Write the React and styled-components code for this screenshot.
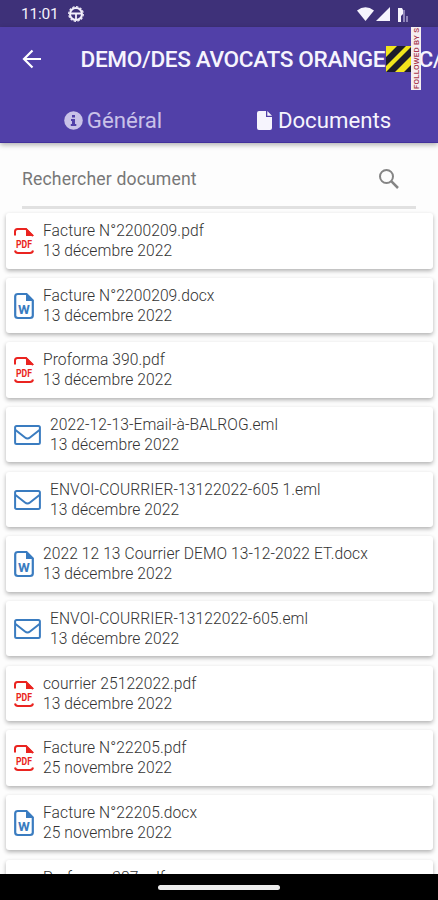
import React from "react";
import styled, { createGlobalStyle, css } from "styled-components";

const GlobalStyle = createGlobalStyle`
  * {
    box-sizing: border-box;
  }

  body {
    margin: 0;
    font-family: Roboto, "Liberation Sans", sans-serif;
    background-color: #fafafa;
  }

  svg {
    flex-shrink: 0;
  }
`;

const Screen = styled.div`
  width: 438px;
  height: 900px;
  overflow: hidden;
  display: flex;
  flex-direction: column;
  background-color: #fdfdfd;
`;

const StatusBar = styled.div`
  height: 27px;
  flex-shrink: 0;
  padding: 1px 29px 0 21px;
  display: flex;
  align-items: center;
  justify-content: space-between;
  background-color: #3e3179;
  color: #f3f0fb;
`;

const StatusGroup = styled.div`
  display: flex;
  align-items: center;
  gap: ${(props) => props.gap}px;
`;

const Clock = styled.span`
  font-size: 15.5px;
  letter-spacing: -0.2px;
`;

const Header = styled.header`
  position: relative;
  z-index: 1;
  height: 116px;
  flex-shrink: 0;
  background-color: #5140a8;
  border-bottom: 1px solid #42309c;
  color: #f6f4fd;
  box-shadow: 0 2px 5px rgba(0, 0, 0, 0.3);
`;

const TitleRow = styled.div`
  height: 64px;
  padding-left: 22px;
  display: flex;
  align-items: center;
  overflow: hidden;
`;

const Title = styled.h1`
  margin: 0 0 0 38.5px;
  font-size: 22.6px;
  font-weight: 500;
  letter-spacing: -0.35px;
  white-space: nowrap;
`;

const Tabs = styled.nav`
  display: grid;
  grid-template-columns: 226px 1fr;
`;

const Tab = styled.div`
  height: 58px;
  padding-right: ${(props) => (props.active ? 16 : 0)}px;
  display: flex;
  align-items: center;
  justify-content: center;
  gap: ${(props) => (props.active ? 6 : 4)}px;
  font-size: 22.2px;
  color: ${(props) => (props.active ? "#f6f4fd" : "#c9c2e8")};
`;

const Banner = styled.div`
  position: absolute;
  top: 0;
  left: 386px;
  width: 35px;
  height: 63px;
`;

const Hazard = styled.svg`
  position: absolute;
  top: 19px;
  left: 0;
`;

const Strip = styled.svg`
  position: absolute;
  top: 0;
  left: 25px;
`;

const Search = styled.div`
  height: 66px;
  flex-shrink: 0;
  margin: 0 22px;
  padding: 8px 16px 0 0;
  display: flex;
  align-items: center;
  justify-content: space-between;
  border-bottom: 3px solid #e1e1e1;
  font-size: 17.6px;
  color: #777;
`;

const Placeholder = styled.span`
  letter-spacing: 0.15px;
`;

const List = styled.div`
  flex: 1;
  min-height: 0;
  overflow: hidden;
  padding: 4px 5px 0 6px;
`;

const Card = styled.div`
  height: 55.5px;
  margin-bottom: 9.17px;
  padding: 0.5px 0 0 8px;
  display: flex;
  align-items: center;
  gap: 9px;
  background-color: #fff;
  border-radius: 3px;
  box-shadow: 0 2px 4px rgba(0, 0, 0, 0.3);
`;

const CardText = styled.div`
  font-size: 15.6px;
  font-weight: 300;
  line-height: 20px;
  letter-spacing: 0.08px;
  color: #333;
  white-space: nowrap;
`;

const NavBar = styled.div`
  height: 26px;
  flex-shrink: 0;
  display: flex;
  align-items: center;
  justify-content: center;
  background-color: #000;
`;

const NavHandle = styled.div`
  width: 122px;
  height: 5px;
  border-radius: 3px;
  background-color: #ececec;
`;

const iconText = css`
  font-family: Roboto, sans-serif;
  font-weight: 700;
`;

const IconLabel = styled.text`
  ${iconText}
  text-anchor: middle;
`;

const PdfIcon = () => (
  <svg width="20" height="28" viewBox="0 0 20 28" fill="none">
    <path
      d="M1 8.5V4.5Q1 2 3.5 2H12L19 9M1 23.5Q1.5 26 4 26H16Q18.5 26 19 23.5"
      stroke="#ea2420"
      strokeWidth="2"
    />
    <path d="M12 1L20 9H12Z" fill="#ea2420" />
    <IconLabel x="10" y="20.5" fontSize="10" fill="#ea2420" textLength="16" lengthAdjust="spacingAndGlyphs">
      PDF
    </IconLabel>
  </svg>
);

const WordIcon = () => (
  <svg width="20" height="28" viewBox="0 0 20 28" fill="none">
    <path
      d="M12.5 2H4Q1.2 2 1.2 4.5V23.5Q1.2 26 4 26H16Q18.8 26 18.8 23.5V8.5Z"
      stroke="#3a7cc0"
      strokeWidth="2.2"
    />
    <path d="M12 1.5V9H19.5Z" fill="#3a7cc0" />
    <IconLabel x="10" y="21.5" fontSize="13.5" fill="#3a7cc0">
      W
    </IconLabel>
  </svg>
);

const MailIcon = () => (
  <svg width="27" height="20" viewBox="0 0 27 20" fill="none" stroke="#3a7cc0">
    <rect x="1.1" y="1.1" width="24.8" height="17.8" rx="1.5" strokeWidth="2" />
    <path d="M1.5 5L11 12.5Q13.5 14.5 16 12.5L25.5 5" strokeWidth="2" />
  </svg>
);

const icons = { pdf: PdfIcon, docx: WordIcon, eml: MailIcon };

const files = [
  { name: "Facture N°2200209.pdf", date: "13 décembre 2022" },
  { name: "Facture N°2200209.docx", date: "13 décembre 2022" },
  { name: "Proforma 390.pdf", date: "13 décembre 2022" },
  { name: "2022-12-13-Email-à-BALROG.eml", date: "13 décembre 2022" },
  { name: "ENVOI-COURRIER-13122022-605 1.eml", date: "13 décembre 2022" },
  { name: "2022 12 13 Courrier DEMO 13-12-2022 ET.docx", date: "13 décembre 2022" },
  { name: "ENVOI-COURRIER-13122022-605.eml", date: "13 décembre 2022" },
  { name: "courrier 25122022.pdf", date: "13 décembre 2022" },
  { name: "Facture N°22205.pdf", date: "25 novembre 2022" },
  { name: "Facture N°22205.docx", date: "25 novembre 2022" },
  { name: "Proforma 387.pdf", date: "25 novembre 2022" },
];

const FileCard = ({ name, date }) => {
  const Icon = icons[name.split(".").pop()];
  return (
    <Card>
      <Icon />
      <CardText>
        <div>{name}</div>
        <div>{date}</div>
      </CardText>
    </Card>
  );
};

export default () => (
  <Screen>
    <GlobalStyle />
    <StatusBar>
      <StatusGroup gap={9}>
        <Clock>11:01</Clock>
        <svg width="16" height="16" viewBox="0 0 16 16" fill="none" stroke="#f3f0fb">
          <circle cx="8" cy="8" r="6" strokeWidth="2" />
          <circle cx="8" cy="8" r="7.3" strokeWidth="1.2" strokeDasharray="2.3 1.5" />
          <path d="M3 7.5H13M8 8V13" strokeWidth="1.8" />
        </svg>
      </StatusGroup>
      <StatusGroup gap={2}>
        <svg width="17" height="14" viewBox="0 0 17 14">
          <path d="M0 3.5Q8.5 -3 17 3.5L8.5 14Z" fill="#f6f4fd" />
        </svg>
        <svg width="14" height="14" viewBox="0 0 14 14">
          <path d="M14 0V14H0Z" fill="#f6f4fd" />
        </svg>
        <svg width="17" height="15" viewBox="0 0 17 15">
          <path d="M6 1H10L11 3V7L9 9V15H6Z" fill="#f6f4fd" />
          <path d="M12 3V15M15 9V15" stroke="#a9a0ce" strokeWidth="1.5" />
        </svg>
      </StatusGroup>
    </StatusBar>

    <Header>
      <TitleRow>
        <svg width="20" height="20" viewBox="0 0 20 20" fill="none" stroke="#fff" strokeWidth="2.2">
          <path d="M19 10H2.5M10.5 1.5L2 10L10.5 18.5" />
        </svg>
        <Title>DEMO/DES AVOCATS ORANGE C/ C/</Title>
      </TitleRow>
      <Tabs>
        <Tab>
          <svg width="19" height="19" viewBox="0 0 19 19">
            <circle cx="9.5" cy="9.5" r="9.3" fill="#c9c2e8" />
            <path d="M8 4H11V6.5H8ZM7 8H11V13H12.3V15H6.8V13H8V10H7Z" fill="#5140a8" />
          </svg>
          Général
        </Tab>
        <Tab active>
          <svg width="15" height="19" viewBox="0 0 15 19">
            <path d="M2 0H9V6H15V17Q15 19 13 19H2Q0 19 0 17V2Q0 0 2 0ZM10.3 0L15 4.8H10.3Z" fill="#f6f4fd" />
          </svg>
          Documents
        </Tab>
      </Tabs>
      <Banner>
        <Hazard width="26" height="26" viewBox="0 0 26 26">
          <rect width="26" height="26" fill="#f2e51c" />
          <path d="M0 11L11 0H20L0 20ZM4 26H0L26 0V9L9 26ZM18 26L26 18V26Z" fill="#1d1c2b" />
        </Hazard>
        <Strip width="10" height="63" viewBox="0 0 10 63">
          <rect width="10" height="63" fill="#f5eef0" />
          <text x="-62" y="8" transform="rotate(-90)" fontSize="8" fontWeight="500" fill="#a8384d" textLength="61">
            FOLLOWED BY S
          </text>
        </Strip>
      </Banner>
    </Header>

    <Search>
      <Placeholder>Rechercher document</Placeholder>
      <svg width="22" height="22" viewBox="0 0 22 22" fill="none" stroke="#858585" strokeWidth="2">
        <circle cx="8.5" cy="8.5" r="6.5" />
        <path d="M13.2 13.2L20 20" strokeWidth="2.5" />
      </svg>
    </Search>

    <List>
      {files.map((file) => (
        <FileCard key={file.name} {...file} />
      ))}
    </List>

    <NavBar>
      <NavHandle />
    </NavBar>
  </Screen>
);
